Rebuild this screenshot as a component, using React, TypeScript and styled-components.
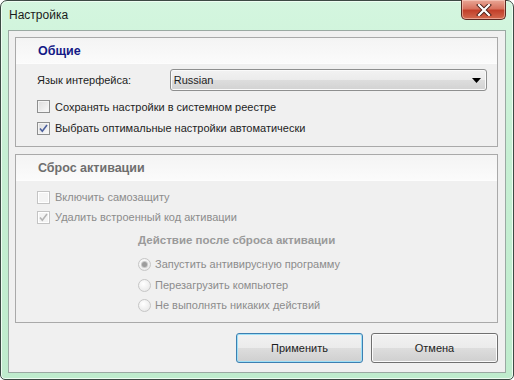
import React, { FC } from 'react';
import styled, { createGlobalStyle } from 'styled-components';

const GlobalStyle = createGlobalStyle`
  html, body {
    margin: 0;
    padding: 0;
    background: #ffffff;
  }
  body {
    font-family: "Liberation Sans", Arial, sans-serif;
    font-size: 11px;
  }
`;

const Window = styled.div`
  box-sizing: border-box;
  width: 514px;
  height: 380px;
  border: 1px solid #3c4a44;
  border-radius: 7px 7px 5px 5px;
  background: linear-gradient(180deg, #d4f6df 0%, #c6efd3 40%, #bfeccd 100%);
  box-shadow: inset 0 0 0 1px #eefdf2;
  display: flex;
  flex-direction: column;
  padding: 0 7px 6px 7px;
`;

const TitleBar = styled.div`
  height: 29px;
  display: flex;
  align-items: flex-start;
  justify-content: space-between;
`;

const Title = styled.div`
  margin-top: 7px;
  margin-left: 1px;
  color: #1b1b1b;
  font-size: 12px;
`;

const CloseButton = styled.div`
  box-sizing: border-box;
  width: 45px;
  height: 20px;
  margin-top: -1px;
  border: 1px solid #5b2a22;
  border-top: none;
  border-radius: 0 0 5px 5px;
  background: linear-gradient(180deg, #e9a796 0%, #d8735f 45%, #c2402a 55%, #d36a4f 100%);
  box-shadow: inset 0 0 0 1px rgba(255, 220, 210, 0.5);
  display: flex;
  align-items: center;
  justify-content: center;
`;

const Client = styled.div`
  flex: 1;
  box-sizing: border-box;
  background: #f0f0f0;
  border: 1px solid #9aa9a2;
  padding: 6px 7px 9px 6px;
  display: flex;
  flex-direction: column;
  gap: 7px;
`;

const Group = styled.div<{ $height: number }>`
  box-sizing: border-box;
  height: ${(p) => p.$height}px;
  border: 1px solid #a9a9a9;
  background: #f0f0f0;
  display: flex;
  flex-direction: column;
`;

const GroupHeader = styled.div<{ $disabled?: boolean }>`
  height: 25px;
  display: flex;
  align-items: center;
  padding-left: 22px;
  background: linear-gradient(180deg, #f4f4f4 0%, #f8f8f8 60%, #fbfbfb 100%);
  border-bottom: 1px solid #fdfdfd;
  font-weight: bold;
  font-size: 12.5px;
  color: ${(p) => (p.$disabled ? '#6e6e6e' : '#141a86')};
`;

const GroupBody = styled.div`
  padding: 5px 10px 0 21px;
  display: flex;
  flex-direction: column;
`;

const Row = styled.div<{ $h: number; $indent?: number }>`
  height: ${(p) => p.$h}px;
  display: flex;
  align-items: center;
  padding-left: ${(p) => p.$indent || 0}px;
`;

const Label = styled.span<{ $disabled?: boolean }>`
  color: ${(p) => (p.$disabled ? '#8c8c8c' : '#1e1e1e')};
  white-space: nowrap;
`;

const LangLabel = styled(Label)`
  width: 133px;
`;

const SubHeading = styled.span`
  font-weight: bold;
  font-size: 11.5px;
  color: #9a9a9a;
`;

const Select = styled.div`
  box-sizing: border-box;
  width: 318px;
  height: 22px;
  border: 1px solid #8e8f8f;
  border-radius: 3px;
  background: linear-gradient(180deg, #f2f2f2 0%, #ebebeb 50%, #dddddd 51%, #d2d2d2 100%);
  box-shadow: inset 0 0 0 1px #fafafa;
  display: flex;
  align-items: center;
  justify-content: space-between;
  padding: 0 5px 0 3px;
  color: #1e1e1e;
`;

const Box = styled.span<{ $disabled?: boolean }>`
  box-sizing: border-box;
  width: 13px;
  height: 13px;
  margin-right: 5px;
  border: 1px solid ${(p) => (p.$disabled ? '#c4c4c4' : '#8e8f8f')};
  background: ${(p) =>
    p.$disabled
      ? '#f4f4f4'
      : 'linear-gradient(135deg, #dcdcdc 0%, #eeeeee 60%, #fbfbfb 100%)'};
  box-shadow: inset 0 0 0 1px ${(p) => (p.$disabled ? '#ffffff' : '#f4f4f4')};
  display: flex;
  align-items: center;
  justify-content: center;
  flex-shrink: 0;
`;

const Radio = styled.span`
  box-sizing: border-box;
  width: 13px;
  height: 13px;
  margin-right: 4px;
  border-radius: 50%;
  border: 1px solid #c6c6c6;
  background: radial-gradient(circle at 40% 35%, #ffffff 0%, #ececec 70%, #dcdcdc 100%);
  display: flex;
  align-items: center;
  justify-content: center;
  flex-shrink: 0;
`;

const RadioDot = styled.span`
  width: 5px;
  height: 5px;
  border-radius: 50%;
  background: #9c9c9c;
  box-shadow: 0 0 0 1px #c8c8c8;
`;

const Buttons = styled.div`
  margin-top: 3px;
  display: flex;
  justify-content: flex-end;
  gap: 8px;
`;

const Button = styled.div<{ $default?: boolean }>`
  box-sizing: border-box;
  width: 127px;
  height: 30px;
  border: 1px solid ${(p) => (p.$default ? '#3c7fb1' : '#707070')};
  border-radius: 3px;
  background: linear-gradient(180deg, #f2f2f2 0%, #ebebeb 50%, #dddddd 51%, #cfcfcf 100%);
  box-shadow: inset 0 0 0 1px ${(p) => (p.$default ? '#9ee0f7' : '#fbfbfb')};
  display: flex;
  align-items: center;
  justify-content: center;
  color: #1e1e1e;
`;

const Check: FC<{ disabled?: boolean }> = ({ disabled }) => (
  <svg width="9" height="9" viewBox="0 0 9 9">
    <path
      d="M1 4.5 L3.3 7.2 L8 1"
      fill="none"
      stroke={disabled ? '#b4b4b4' : '#4b5f9c'}
      strokeWidth="1.6"
    />
  </svg>
);

const CheckBox: FC<{ checked?: boolean; disabled?: boolean; label: string }> = ({
  checked,
  disabled,
  label,
}) => (
  <>
    <Box $disabled={disabled}>{checked && <Check disabled={disabled} />}</Box>
    <Label $disabled={disabled}>{label}</Label>
  </>
);

const RadioItem: FC<{ selected?: boolean; label: string }> = ({ selected, label }) => (
  <>
    <Radio>{selected && <RadioDot />}</Radio>
    <Label $disabled>{label}</Label>
  </>
);

const App: FC = () => (
  <>
    <GlobalStyle />
    <Window>
      <TitleBar>
        <Title>Настройка</Title>
        <CloseButton>
          <svg width="16" height="12" viewBox="0 0 16 12">
            <path
              d="M3 1 L13 11 M13 1 L3 11"
              stroke="#4a2018"
              strokeWidth="4"
              strokeLinecap="square"
            />
            <path
              d="M3 1 L13 11 M13 1 L3 11"
              stroke="#ffffff"
              strokeWidth="2.2"
              strokeLinecap="square"
            />
          </svg>
        </CloseButton>
      </TitleBar>
      <Client>
        <Group $height={110}>
          <GroupHeader>Общие</GroupHeader>
          <GroupBody>
            <Row $h={22}>
              <LangLabel>Язык интерфейса:</LangLabel>
              <Select>
                <span>Russian</span>
                <svg width="9" height="5" viewBox="0 0 9 5">
                  <path d="M0 0 H9 L4.5 5 Z" fill="#000" />
                </svg>
              </Select>
            </Row>
            <Row $h={23} style={{ marginTop: 4 }}>
              <CheckBox label="Сохранять настройки в системном реестре" />
            </Row>
            <Row $h={20}>
              <CheckBox checked label="Выбрать оптимальные настройки автоматически" />
            </Row>
          </GroupBody>
        </Group>
        <Group $height={169}>
          <GroupHeader $disabled>Сброс активации</GroupHeader>
          <GroupBody style={{ paddingTop: 6 }}>
            <Row $h={20}>
              <CheckBox disabled label="Включить самозащиту" />
            </Row>
            <Row $h={20}>
              <CheckBox disabled checked label="Удалить встроенный код активации" />
            </Row>
            <Row $h={26} $indent={101}>
              <SubHeading>Действие после сброса активации</SubHeading>
            </Row>
            <Row $h={22} $indent={101}>
              <RadioItem selected label="Запустить антивирусную программу" />
            </Row>
            <Row $h={20} $indent={101}>
              <RadioItem label="Перезагрузить компьютер" />
            </Row>
            <Row $h={20} $indent={101}>
              <RadioItem label="Не выполнять никаких действий" />
            </Row>
          </GroupBody>
        </Group>
        <Buttons>
          <Button $default>Применить</Button>
          <Button>Отмена</Button>
        </Buttons>
      </Client>
    </Window>
  </>
);

export default App;
